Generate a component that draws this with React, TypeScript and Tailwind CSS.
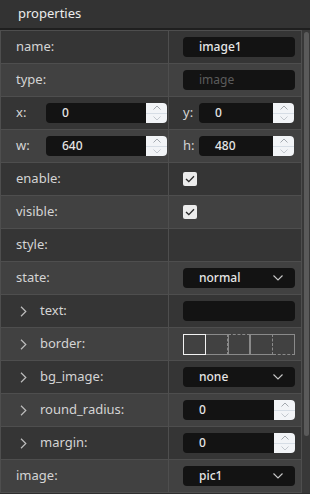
import React from "react";

type Row =
  | { kind: "text"; label: string; value: string; muted?: boolean; expand?: boolean }
  | { kind: "pair"; a: string; av: string; b: string; bv: string }
  | { kind: "check"; label: string }
  | { kind: "empty"; label: string }
  | { kind: "select"; label: string; value: string; expand?: boolean }
  | { kind: "spin"; label: string; value: string; expand?: boolean }
  | { kind: "border"; label: string; expand?: boolean };

const rows: Row[] = [
  { kind: "text", label: "name:", value: "image1" },
  { kind: "text", label: "type:", value: "image", muted: true },
  { kind: "pair", a: "x:", av: "0", b: "y:", bv: "0" },
  { kind: "pair", a: "w:", av: "640", b: "h:", bv: "480" },
  { kind: "check", label: "enable:" },
  { kind: "check", label: "visible:" },
  { kind: "empty", label: "style:" },
  { kind: "select", label: "state:", value: "normal" },
  { kind: "text", label: "text:", value: "", expand: true },
  { kind: "border", label: "border:", expand: true },
  { kind: "select", label: "bg_image:", value: "none", expand: true },
  { kind: "spin", label: "round_radius:", value: "0", expand: true },
  { kind: "spin", label: "margin:", value: "0", expand: true },
  { kind: "select", label: "image:", value: "pic1" },
];

const Spinner = () => (
  <div className="flex h-full w-[21px] flex-col rounded-r-[4px] bg-[#f2f4f7]">
    <div className="flex flex-1 items-center justify-center border-b border-[#d6dde5]">
      <svg width="8" height="5" viewBox="0 0 8 5" fill="none">
        <path d="M0.5 4.5L4 1L7.5 4.5" stroke="#a3a8ae" strokeWidth="1" />
      </svg>
    </div>
    <div className="flex flex-1 items-center justify-center">
      <svg width="8" height="5" viewBox="0 0 8 5" fill="none">
        <path d="M0.5 0.5L4 4L7.5 0.5" stroke="#c3c8ce" strokeWidth="1" />
      </svg>
    </div>
  </div>
);

const SpinBox = ({ value, className }: { value: string; className: string }) => (
  <div className={`flex h-[20px] items-center rounded-[4px] bg-[#131313] ${className}`}>
    <span className="flex-1 pl-[16px] text-[12px] font-medium text-[#e6e6e6]">{value}</span>
    <Spinner />
  </div>
);

const Chevron = () => (
  <svg width="10" height="6" viewBox="0 0 10 6" fill="none">
    <path d="M0.5 0.5L5 5L9.5 0.5" stroke="#c8c8c8" strokeWidth="1.1" />
  </svg>
);

const Arrow = () => (
  <svg width="7" height="11" viewBox="0 0 7 11" fill="none" className="mr-[13px]">
    <path d="M1 0.8L5.8 5.5L1 10.2" stroke="#bdbdbd" strokeWidth="1.2" />
  </svg>
);

const Check = () => (
  <div className="flex h-[14px] w-[14px] items-center justify-center rounded-[2px] bg-[#ececec]">
    <svg width="10" height="8" viewBox="0 0 10 8" fill="none">
      <path d="M1 4L3.8 6.6L9 1.2" stroke="#2a2a2a" strokeWidth="1.3" />
    </svg>
  </div>
);

const Label = ({ text, expand }: { text: string; expand?: boolean }) => (
  <div className={`flex h-full w-[168px] items-center border-r border-[#4e4e4e] ${expand ? "pl-[19px]" : "pl-[15px]"}`}>
    {expand && <Arrow />}
    <span className="text-[13px] text-[#d4d4d4]">{text}</span>
  </div>
);

const BorderBoxes = () => (
  <div className="flex h-[21px] w-[112px]">
    <div className="h-full flex-1 border border-[#f2f2f2]" />
    <div className="h-full flex-1 border border-l-0 border-[#8a8a8a]" style={{ borderRightStyle: "dashed" }} />
    <div className="h-full flex-1 border border-[#8a8a8a]" style={{ borderTopStyle: "dashed" }} />
    <div className="h-full flex-1 border border-[#8a8a8a]" style={{ borderRightStyle: "dashed" }} />
    <div className="h-full flex-1 border border-l-0 border-[#8a8a8a]" style={{ borderBottomStyle: "dashed" }} />
  </div>
);

const Value = ({ row }: { row: Row }) => {
  switch (row.kind) {
    case "text":
      return (
        <div className="flex h-[20px] w-[112px] items-center rounded-[4px] bg-[#131313] pl-[16px]">
          <span className={`text-[12px] ${row.muted ? "text-[#5c5c5c]" : "font-medium text-[#e6e6e6]"}`}>
            {row.value}
          </span>
        </div>
      );
    case "check":
      return <Check />;
    case "select":
      return (
        <div className="flex h-[20px] w-[112px] items-center justify-between rounded-[4px] bg-[#131313] pl-[16px] pr-[12px]">
          <span className="text-[12px] font-medium text-[#e6e6e6]">{row.value}</span>
          <Chevron />
        </div>
      );
    case "spin":
      return <SpinBox value={row.value} className="w-[112px]" />;
    case "border":
      return <BorderBoxes />;
    default:
      return null;
  }
};

export default function App() {
  return (
    <div className="h-[494px] w-[310px] overflow-hidden bg-[#2e2e2e]" style={{ fontFamily: '"Noto Sans", "Open Sans", sans-serif' }}>
      <div className="flex h-[30px] items-center border-b-2 border-[#1f1f1f] bg-[#333333] pl-[18px]">
        <span className="text-[13px] text-[#ececec]">properties</span>
      </div>
      <div className="flex">
        <div className="w-[302px] border-l border-t border-[#4e4e4e]">
          {rows.map((row, i) => (
            <div
              key={i}
              className={`flex h-[33px] border-b border-r border-[#4e4e4e] ${i % 2 === 0 ? "bg-[#353535]" : "bg-[#414141]"}`}
            >
              {row.kind === "pair" ? (
                <>
                  <div className="flex h-full w-[168px] items-center border-r border-[#4e4e4e] pl-[15px]">
                    <span className="w-[30px] text-[13px] text-[#d4d4d4]">{row.a}</span>
                    <SpinBox value={row.av} className="w-[121px]" />
                  </div>
                  <div className="flex h-full flex-1 items-center pl-[14px]">
                    <span className="w-[16px] text-[13px] text-[#d4d4d4]">{row.b}</span>
                    <SpinBox value={row.bv} className="w-[95px]" />
                  </div>
                </>
              ) : (
                <>
                  <Label text={row.label} expand={"expand" in row ? row.expand : false} />
                  <div className="flex h-full flex-1 items-center pl-[14px]">
                    <Value row={row} />
                  </div>
                </>
              )}
            </div>
          ))}
        </div>
        <div className="flex-1 bg-[#383838] pt-[2px]">
          <div className="mx-auto h-[404px] w-[5px] rounded-full bg-[#5a5a5a]" />
        </div>
      </div>
    </div>
  );
}
